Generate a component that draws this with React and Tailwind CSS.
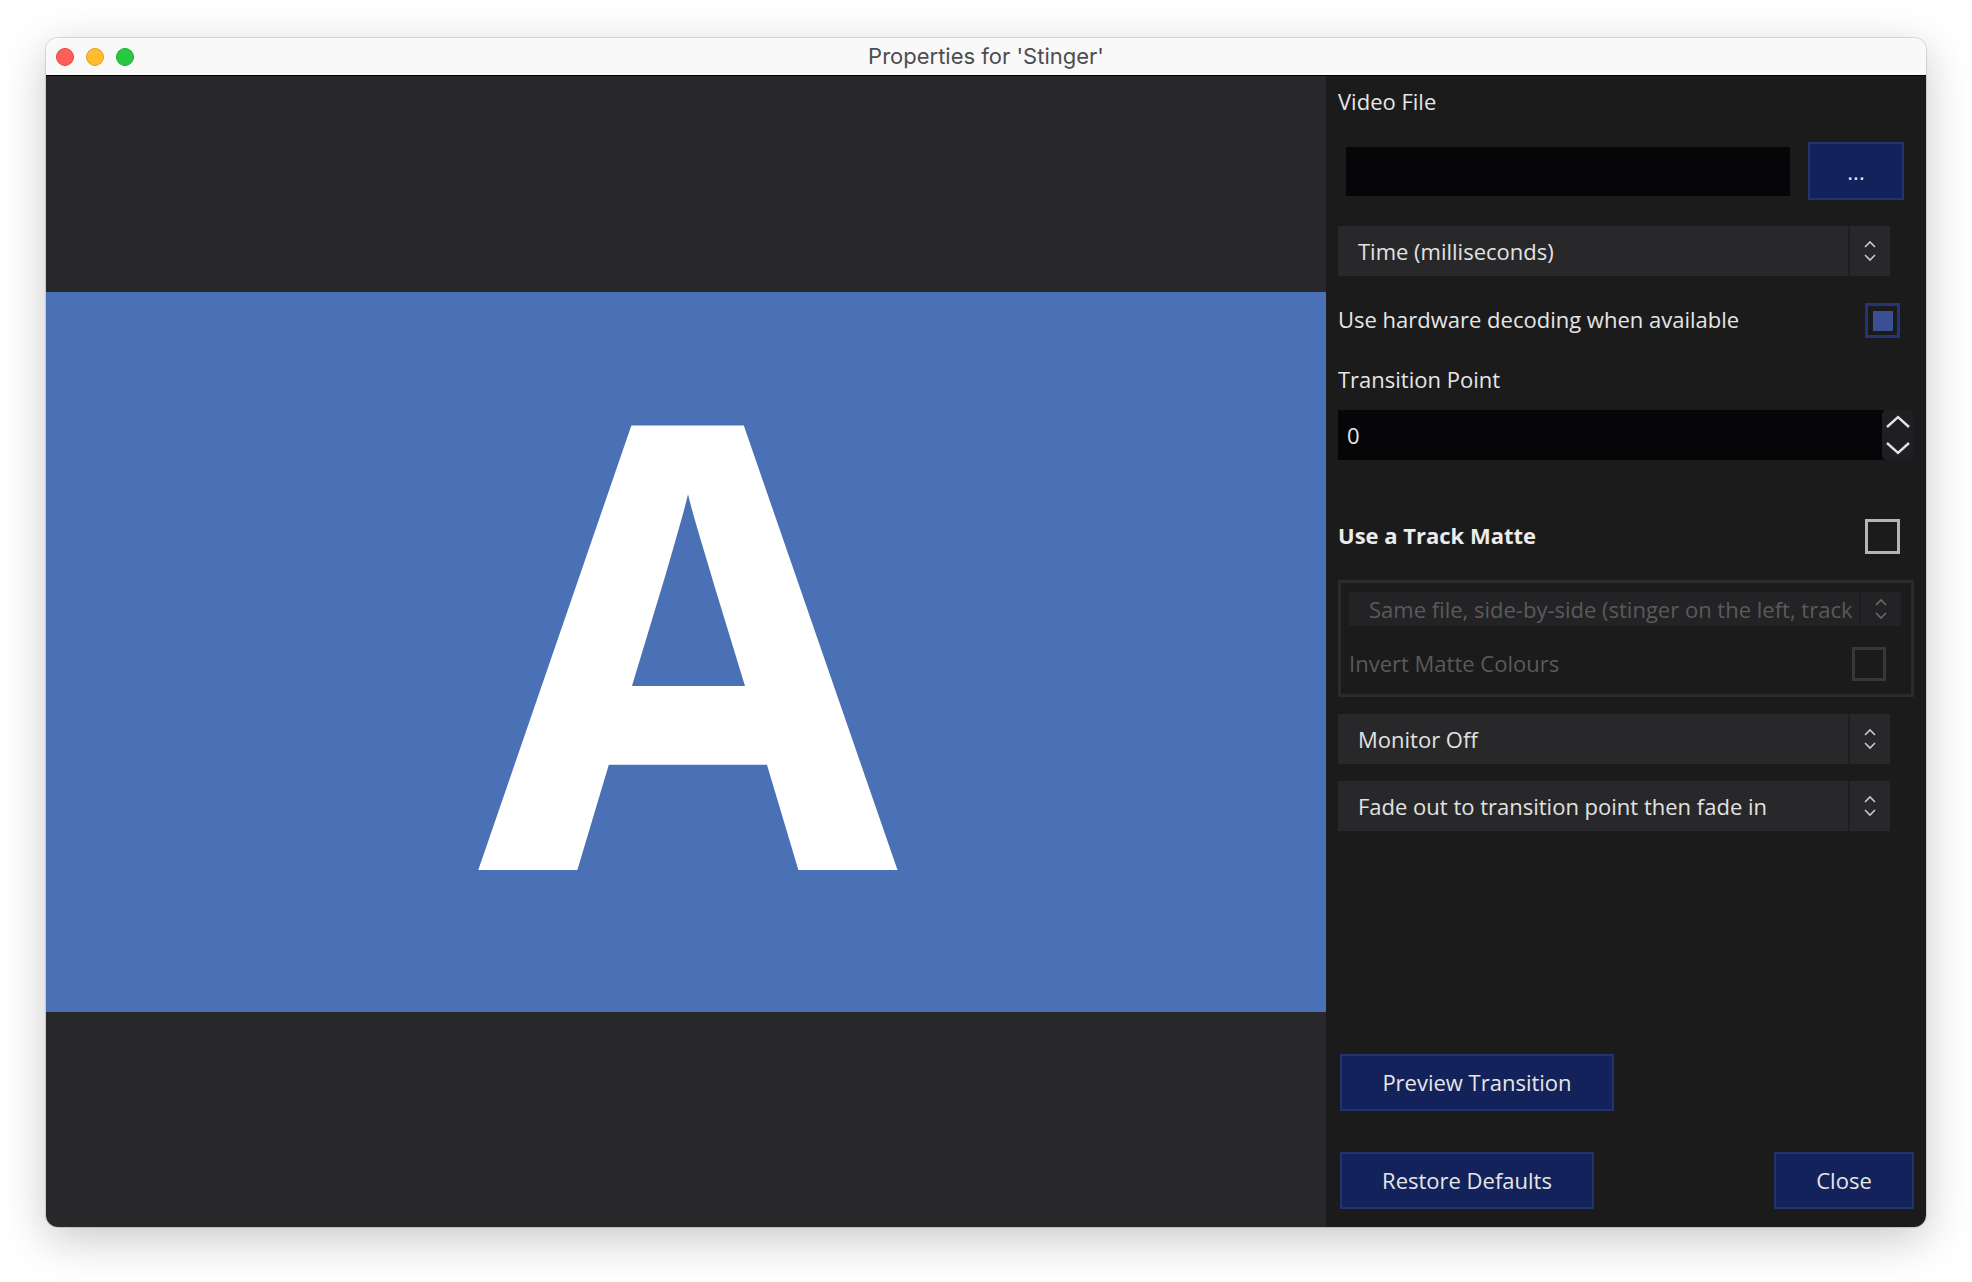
import React from "react";

const font = { fontFamily: "'Open Sans', 'Noto Sans', sans-serif" };

function UpDown({ dim = false }) {
  const c = dim ? "#6a6a6a" : "#c8c8c8";
  return (
    <svg width="14" height="24" viewBox="0 0 14 24" fill="none">
      <polyline points="2,8 7,3 12,8" stroke={c} strokeWidth="1.6" />
      <polyline points="2,16 7,21 12,16" stroke={c} strokeWidth="1.6" />
    </svg>
  );
}

function Select({ label, width = "w-[552px]", height = "h-[50px]", dim = false }) {
  return (
    <div className={`flex ${width} ${height} ${dim ? "bg-[#232325]" : "bg-[#28282a]"}`}>
      <div
        className={`flex-1 flex items-center pl-[20px] text-[22px] whitespace-nowrap overflow-hidden ${
          dim ? "text-[#5a5a5a]" : "text-[#e2e2e2]"
        }`}
      >
        {label}
      </div>
      <div className={`w-[2px] ${dim ? "bg-[#1e1e20]" : "bg-[#1f1f21]"}`} />
      <div className="w-[40px] flex items-center justify-center">
        <UpDown dim={dim} />
      </div>
    </div>
  );
}

function NavyButton({ children, className = "" }) {
  return (
    <button
      className={`bg-[#13225a] border-2 border-[#22336e] text-[#e6e6e6] text-[22px] flex items-center justify-center ${className}`}
    >
      {children}
    </button>
  );
}

export default function App() {
  return (
    <div className="w-[1972px] h-[1282px] bg-white pt-[38px] pl-[46px]" style={font}>
      <div className="w-[1880px] h-[1189px] rounded-[12px] overflow-hidden flex flex-col shadow-[0_12px_45px_rgba(0,0,0,0.22),0_0_0_1px_rgba(0,0,0,0.12)]">
        {/* title bar */}
        <div className="h-[38px] bg-[#f9f9f9] border-b border-black flex items-center">
          <div className="flex gap-[12px] pl-[10px]">
            <div className="w-[18px] h-[18px] rounded-full bg-[#fe5f57] border border-[#e2463f]" />
            <div className="w-[18px] h-[18px] rounded-full bg-[#febc2e] border border-[#e1a125]" />
            <div className="w-[18px] h-[18px] rounded-full bg-[#28c840] border border-[#1dad2f]" />
          </div>
          <div
            className="flex-1 text-center text-[22px] text-[#4d4d4d] pr-[88px]"
            style={{ fontFamily: "Inter, 'Liberation Sans', sans-serif" }}
          >
            Properties for 'Stinger'
          </div>
        </div>

        {/* body */}
        <div className="flex flex-1">
          {/* preview */}
          <div className="w-[1280px] bg-[#28282a] flex items-center">
            <div className="w-full h-[720px] bg-[#4a70b5] flex items-center justify-center">
              <span
                className="text-white font-bold text-[620px] leading-none mt-[-44px] ml-[4px] scale-x-[0.98]"
                style={{ fontFamily: "'Open Sans', sans-serif" }}
              >
                A
              </span>
            </div>
          </div>

          {/* properties */}
          <div className="w-[600px] bg-[#1b1b1b] pl-[12px] flex flex-col">
            <div className="mt-[12px] h-[28px] pb-[2px] flex items-center text-[22px] text-[#e6e6e6]">
              Video File
            </div>

            <div className="mt-[26px] flex items-center h-[58px] pl-[8px]">
              <div className="w-[444px] h-[49px] bg-[#060608]" />
              <NavyButton className="ml-[18px] w-[96px] h-[58px] text-[14px]">...</NavyButton>
            </div>

            <div className="mt-[26px]">
              <Select label="Time (milliseconds)" />
            </div>

            <div className="mt-[27px] h-[35px] w-[562px] flex items-center justify-between">
              <span className="pb-[2px] text-[22px] text-[#e6e6e6]">Use hardware decoding when available</span>
              <div className="w-[35px] h-[35px] border-[3px] border-[#233578] flex items-center justify-center">
                <div className="w-[20px] h-[20px] bg-[#3a4f94]" />
              </div>
            </div>

            <div className="mt-[28px] h-[28px] pb-[2px] flex items-center text-[22px] text-[#e6e6e6]">
              Transition Point
            </div>

            <div className="mt-[16px] flex h-[50px]">
              <div className="w-[546px] h-[50px] bg-[#060608] flex items-center pl-[9px] text-[22px] text-[#e6e6e6]">
                0
              </div>
              <div className="w-[32px] h-[50px] -ml-[2px] rounded-[5px] bg-[#1f1f23] flex flex-col items-center justify-center gap-[12px]">
                <svg width="26" height="14" viewBox="0 0 26 14" fill="none">
                  <polyline points="2,12 13,2 24,12" stroke="#e2e2e2" strokeWidth="2.4" />
                </svg>
                <svg width="26" height="14" viewBox="0 0 26 14" fill="none">
                  <polyline points="2,2 13,12 24,2" stroke="#e2e2e2" strokeWidth="2.4" />
                </svg>
              </div>
            </div>

            <div className="mt-[59px] h-[34px] w-[562px] flex items-center justify-between">
              <span className="pb-[2px] text-[22px] font-bold text-[#ececec]">Use a Track Matte</span>
              <div className="w-[35px] h-[35px] border-[3px] border-[#b4b4b4]" />
            </div>

            <div className="mt-[27px] w-[576px] h-[117px] border-[3px] border-[#2b2b2b] pl-[8px] pt-[9px]">
              <Select
                label="Same file, side-by-side (stinger on the left, track"
                height="h-[34px]"
                dim
              />
              <div className="mt-[21px] h-[34px] w-[537px] flex items-center justify-between">
                <span className="pb-[2px] text-[22px] text-[#5a5a5a]">Invert Matte Colours</span>
                <div className="w-[34px] h-[34px] border-[3px] border-[#383838]" />
              </div>
            </div>

            <div className="mt-[17px]">
              <Select label="Monitor Off" />
            </div>
            <div className="mt-[17px]">
              <Select label="Fade out to transition point then fade in" />
            </div>

            <div className="flex-1" />

            <NavyButton className="ml-[2px] w-[274px] h-[57px]">Preview Transition</NavyButton>

            <div className="mt-[41px] mb-[18px] flex items-center justify-between w-[574px] ml-[2px]">
              <NavyButton className="w-[254px] h-[57px]">Restore Defaults</NavyButton>
              <NavyButton className="w-[140px] h-[57px]">Close</NavyButton>
            </div>
          </div>
        </div>
      </div>
    </div>
  );
}
